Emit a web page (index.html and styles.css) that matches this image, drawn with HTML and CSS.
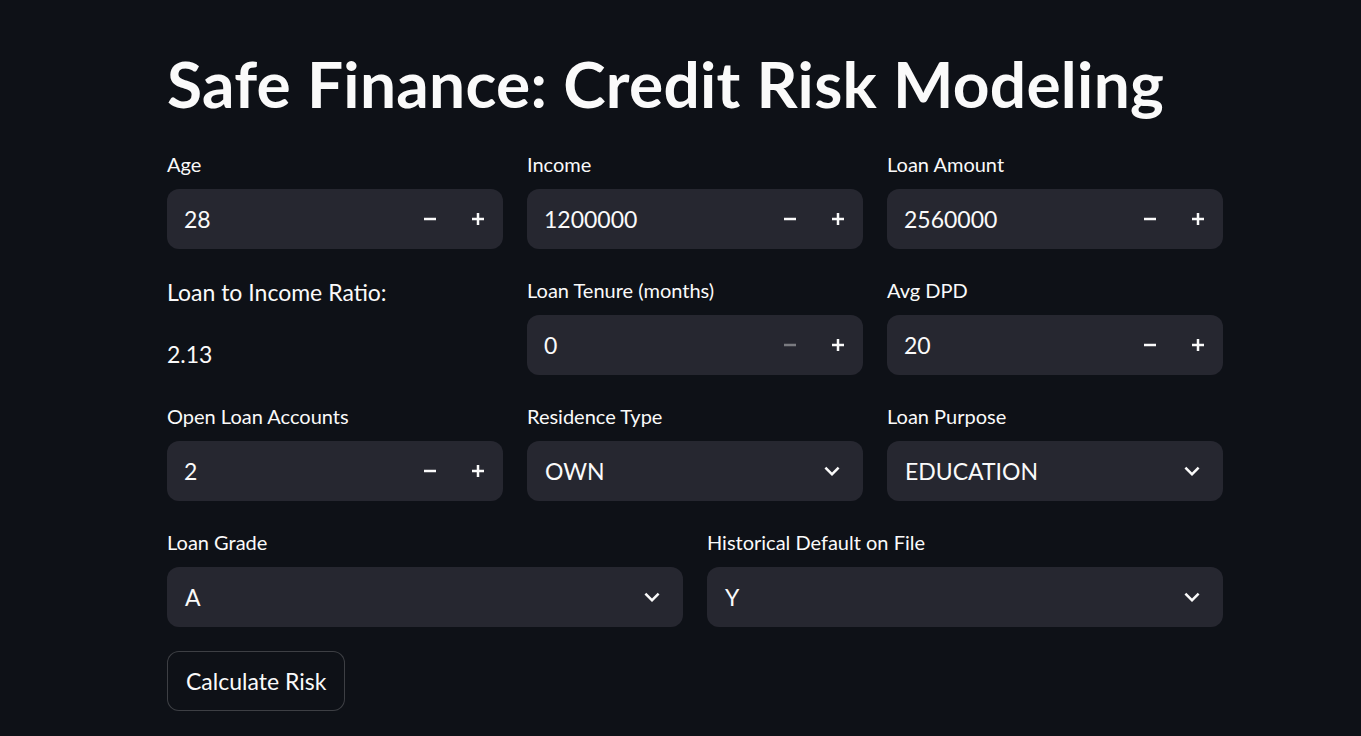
FILE: index.html
```html
<!DOCTYPE html>
<html lang="en">
<head>
<meta charset="utf-8">
<title>Safe Finance: Credit Risk Modeling</title>
<link rel="stylesheet" href="styles.css">
</head>
<body>
<main class="main">
  <h1 class="title">Safe Finance: Credit Risk Modeling</h1>

  <div class="row cols-3">
    <div class="field">
      <label class="label">Age</label>
      <div class="num-input"><span class="value">28</span>
        <button class="step"><svg viewBox="0 0 12 12"><path d="M0 6h12"/></svg></button>
        <button class="step"><svg viewBox="0 0 12 12"><path d="M0 6h12M6 0v12"/></svg></button>
      </div>
    </div>
    <div class="field">
      <label class="label">Income</label>
      <div class="num-input"><span class="value">1200000</span>
        <button class="step"><svg viewBox="0 0 12 12"><path d="M0 6h12"/></svg></button>
        <button class="step"><svg viewBox="0 0 12 12"><path d="M0 6h12M6 0v12"/></svg></button>
      </div>
    </div>
    <div class="field">
      <label class="label">Loan Amount</label>
      <div class="num-input"><span class="value">2560000</span>
        <button class="step"><svg viewBox="0 0 12 12"><path d="M0 6h12"/></svg></button>
        <button class="step"><svg viewBox="0 0 12 12"><path d="M0 6h12M6 0v12"/></svg></button>
      </div>
    </div>
  </div>

  <div class="row cols-3">
    <div class="field text-field">
      <p class="md">Loan to Income Ratio:</p>
      <p class="md">2.13</p>
    </div>
    <div class="field">
      <label class="label">Loan Tenure (months)</label>
      <div class="num-input"><span class="value">0</span>
        <button class="step disabled"><svg viewBox="0 0 12 12"><path d="M0 6h12"/></svg></button>
        <button class="step"><svg viewBox="0 0 12 12"><path d="M0 6h12M6 0v12"/></svg></button>
      </div>
    </div>
    <div class="field">
      <label class="label">Avg DPD</label>
      <div class="num-input"><span class="value">20</span>
        <button class="step"><svg viewBox="0 0 12 12"><path d="M0 6h12"/></svg></button>
        <button class="step"><svg viewBox="0 0 12 12"><path d="M0 6h12M6 0v12"/></svg></button>
      </div>
    </div>
  </div>

  <div class="row cols-3">
    <div class="field">
      <label class="label">Open Loan Accounts</label>
      <div class="num-input"><span class="value">2</span>
        <button class="step"><svg viewBox="0 0 12 12"><path d="M0 6h12"/></svg></button>
        <button class="step"><svg viewBox="0 0 12 12"><path d="M0 6h12M6 0v12"/></svg></button>
      </div>
    </div>
    <div class="field">
      <label class="label">Residence Type</label>
      <div class="select"><span class="value">OWN</span>
        <svg class="chev" viewBox="0 0 24 24"><path d="M16.59 8.59L12 13.17 7.41 8.59 6 10l6 6 6-6z"/></svg>
      </div>
    </div>
    <div class="field">
      <label class="label">Loan Purpose</label>
      <div class="select"><span class="value">EDUCATION</span>
        <svg class="chev" viewBox="0 0 24 24"><path d="M16.59 8.59L12 13.17 7.41 8.59 6 10l6 6 6-6z"/></svg>
      </div>
    </div>
  </div>

  <div class="row cols-2">
    <div class="field">
      <label class="label">Loan Grade</label>
      <div class="select"><span class="value">A</span>
        <svg class="chev" viewBox="0 0 24 24"><path d="M16.59 8.59L12 13.17 7.41 8.59 6 10l6 6 6-6z"/></svg>
      </div>
    </div>
    <div class="field">
      <label class="label">Historical Default on File</label>
      <div class="select"><span class="value">Y</span>
        <svg class="chev" viewBox="0 0 24 24"><path d="M16.59 8.59L12 13.17 7.41 8.59 6 10l6 6 6-6z"/></svg>
      </div>
    </div>
  </div>

  <div class="actions">
    <button class="btn">Calculate Risk</button>
  </div>
</main>
</body>
</html>
```

FILE: styles.css
```css
* { box-sizing: border-box; }
html, body {
  margin: 0;
  padding: 0;
  background: #0e1117;
  color: #fafafa;
  font-family: Lato, "Open Sans", "Liberation Sans", sans-serif;
}
.main {
  width: 1056px;
  margin-left: 167px;
  padding-top: 45px;
  display: flex;
  flex-direction: column;
  gap: 24px;
}
.title {
  margin: 0;
  font-size: 64px;
  font-weight: 700;
  line-height: 78px;
  letter-spacing: 0.3px;
  white-space: nowrap;
}
.row {
  display: grid;
  gap: 24px;
}
.cols-3 { grid-template-columns: repeat(3, 1fr); }
.cols-2 { grid-template-columns: repeat(2, 1fr); }
.field {
  display: flex;
  flex-direction: column;
}
.label {
  display: block;
  font-size: 20px;
  line-height: 34px;
  height: 36px;
  margin-bottom: 6px;
  color: #fafafa;
}
.num-input, .select {
  height: 60px;
  background: #262730;
  border-radius: 12px;
  display: flex;
  align-items: center;
  font-size: 23px;
}
.num-input .value, .select .value {
  flex: 1;
  padding-left: 18px;
}
.num-input .value { padding-left: 17px; }
.step {
  width: 48px;
  height: 60px;
  border: none;
  background: transparent;
  padding: 0;
  display: flex;
  align-items: center;
  justify-content: center;
  color: #fafafa;
}
.step:last-child { margin-right: 1px; }
.step svg {
  width: 12px;
  height: 12px;
  fill: none;
  stroke: currentColor;
  stroke-width: 2.5;
}
.step.disabled { color: rgba(250, 250, 250, 0.4); }
.chev {
  width: 30px;
  height: 30px;
  fill: #fafafa;
  margin-right: 16px;
}
.text-field { gap: 24px; }
.md {
  margin: 0;
  font-size: 23px;
  line-height: 38px;
}
.actions { display: flex; }
.btn {
  height: 60px;
  padding: 6px 18px;
  border: 1px solid rgba(250, 250, 250, 0.2);
  border-radius: 12px;
  background: #0e1117;
  color: #fafafa;
  font-family: inherit;
  font-size: 23px;
}
```
